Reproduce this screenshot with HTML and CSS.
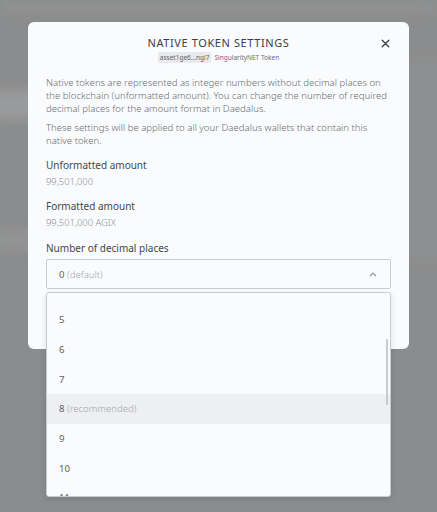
FILE: index.html
```html
<!DOCTYPE html>
<html>
<head>
<meta charset="utf-8">
<link rel="stylesheet" href="styles.css">
</head>
<body>
<div class="backdrop">
  <div class="blur b1"></div>
  <div class="blur b2"></div>
  <div class="blur b3"></div>
  <div class="blur b4"></div>
</div>
<div class="stage">
  <div class="modal">
    <div class="header">
      <div class="title">NATIVE TOKEN SETTINGS</div>
      <div class="sub"><span class="chip">asset1ge6...ngl7</span><span class="tname">SingularityNET Token</span></div>
      <svg class="close" width="9" height="9" viewBox="0 0 9 9"><path d="M1.2 1.2 L7.8 7.8 M7.8 1.2 L1.2 7.8" stroke="#3a3d42" stroke-width="1.3" stroke-linecap="round"/></svg>
    </div>
    <p class="desc">Native tokens are represented as integer numbers without decimal places on the blockchain (unformatted amount). You can change the number of required decimal places for the amount format in Daedalus.</p>
    <p class="desc second">These settings will be applied to all your Daedalus wallets that contain this native token.</p>
    <div class="field">
      <div class="label">Unformatted amount</div>
      <div class="value">99,501,000</div>
    </div>
    <div class="field">
      <div class="label">Formatted amount</div>
      <div class="value">99,501,000 AGIX</div>
    </div>
    <div class="label dec">Number of decimal places</div>
    <div class="selectwrap">
      <div class="select">
        <span class="selval">0 <span class="muted">(default)</span></span>
        <svg class="chev" width="8" height="5" viewBox="0 0 8 5"><path d="M1 4 L4 1.2 L7 4" fill="none" stroke="#8a8d92" stroke-width="1.1"/></svg>
      </div>
      <div class="dropdown">
        <div class="list">
          <div class="opt"><span>5</span></div>
          <div class="opt"><span>6</span></div>
          <div class="opt"><span>7</span></div>
          <div class="opt hl"><span>8 <span class="muted">(recommended)</span></span></div>
          <div class="opt"><span>9</span></div>
          <div class="opt"><span>10</span></div>
          <div class="opt"><span>11</span></div>
        </div>
        <div class="thumb"></div>
      </div>
    </div>
  </div>
</div>
</body>
</html>
```
FILE: styles.css
```css
html, body {
  margin: 0;
  padding: 0;
  width: 437px;
  height: 512px;
  overflow: hidden;
}
body {
  background: #8b8c8d;
  font-family: "Noto Sans", "Open Sans", sans-serif;
  position: relative;
}
.backdrop {
  position: absolute;
  inset: 0;
  overflow: hidden;
}
.blur {
  position: absolute;
  filter: blur(6px);
}
.b1 { left: 0; top: 0; width: 437px; height: 14px; background: #909192; }
.b2 { left: -10px; top: 90px; width: 60px; height: 30px; background: #999a9b; }
.b3 { left: -10px; top: 230px; width: 50px; height: 20px; background: #939495; }
.b4 { left: 400px; top: 60px; width: 50px; height: 200px; background: #8e8f90; }
.stage {
  position: relative;
  padding: 22px 0 0 28px;
}
.modal {
  width: 345px;
  height: 291px;
  background: #fafbfc;
  border-radius: 6px;
  padding: 14px 18px 22px 18px;
  box-sizing: content-box;
}
.header {
  position: relative;
  display: flex;
  flex-direction: column;
  align-items: center;
}
.title {
  font-size: 11px;
  letter-spacing: 0.6px;
  color: #3b3e44;
  line-height: 14px;
}
.sub {
  display: flex;
  align-items: center;
  gap: 3px;
  margin-top: 2px;
  font-size: 6.5px;
  line-height: 11px;
  color: #6b6e73;
}
.chip {
  background: #e9eaed;
  padding: 0 2px;
  border-radius: 1px;
  color: #5f6267;
}
.close {
  position: absolute;
  right: 1px;
  top: 3px;
}
.desc {
  margin: 13px 0 0 0;
  font-size: 9.6px;
  line-height: 13px;
  color: #6a6d72;
  font-weight: 300;
}
.desc.second {
  margin-top: 6px;
}
.field {
  margin-top: 12px;
}
.label {
  font-size: 10px;
  line-height: 13px;
  color: #44474c;
}
.value {
  margin-top: 4px;
  font-size: 9.4px;
  line-height: 12px;
  color: #8c8f94;
  font-weight: 300;
}
.label.dec {
  margin-top: 13px;
}
.selectwrap {
  position: relative;
  margin-top: 4px;
}
.select {
  height: 28px;
  border: 1px solid #c9cbcf;
  border-radius: 2px;
  display: flex;
  align-items: center;
  justify-content: space-between;
  padding: 0 13px 0 12px;
  font-size: 9.6px;
  color: #5d6065;
}
.muted {
  color: #a3a6ab;
  font-weight: 300;
}
.chev {
  margin-top: 1px;
}
.dropdown {
  position: absolute;
  left: 0;
  right: 0;
  top: 33px;
  height: 203px;
  background: #fafbfc;
  border: 1px solid #c9cbcf;
  border-radius: 3px;
  box-shadow: 0 2px 6px rgba(0,0,0,0.12);
  overflow: hidden;
  z-index: 2;
}
.list {
  padding-top: 12.17px;
}
.opt {
  height: 29.67px;
  display: flex;
  align-items: center;
  padding-left: 12px;
  font-size: 9.6px;
  color: #5d6065;
}
.opt.hl {
  background: #eeeff2;
}
.thumb {
  position: absolute;
  right: 2px;
  top: 46px;
  width: 2.5px;
  height: 66px;
  border-radius: 2px;
  background: #c8cacd;
}
```
